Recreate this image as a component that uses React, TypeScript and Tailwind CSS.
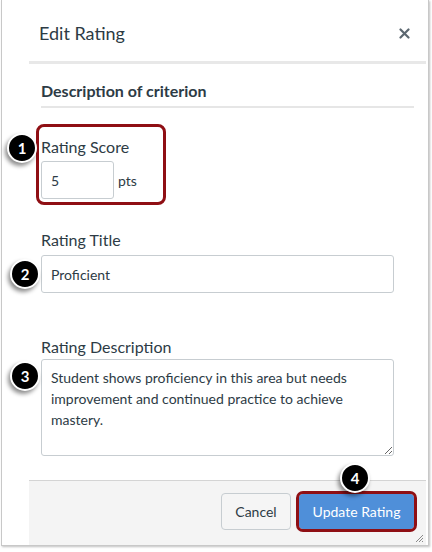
import type { ReactNode } from "react";

const font = { fontFamily: "Lato, 'Open Sans', sans-serif" };

function Badge({ n, className }: { n: number; className: string }) {
  return (
    <div
      className={`absolute flex h-[30px] w-[30px] items-center justify-center rounded-full border-2 border-white bg-black text-[15px] font-bold text-white shadow-[-2px_3px_4px_rgba(0,0,0,0.45)] ${className}`}
    >
      {n}
    </div>
  );
}

function Label({ children, className = "" }: { children: ReactNode; className?: string }) {
  return <div className={`text-base leading-[22px] text-[#2d3b45] ${className}`}>{children}</div>;
}

export default function App() {
  return (
    <div className="relative h-[552px] w-[432px] overflow-hidden bg-white" style={font}>
      <div className="relative ml-px flex h-[546px] w-[428px] flex-col border-x border-b border-[#c8c8c8] bg-white shadow-[1px_1px_2px_rgba(0,0,0,0.25)]">
        <header className="ml-[27px] mr-[2px] flex h-[64px] shrink-0 items-center justify-between border-b-[3px] border-[#e8e8e8] pl-[10px] pr-[16px] pt-[5px]">
          <h1 className="text-[18px] font-normal text-[#2d3b45]">Edit Rating</h1>
          <svg width="11" height="11" viewBox="0 0 11 11" className="mt-[1px]">
            <path d="M1.5 1.5 L9.5 9.5 M9.5 1.5 L1.5 9.5" stroke="#5b6770" strokeWidth="2.2" strokeLinecap="round" />
          </svg>
        </header>

        <div className="flex-1 pl-[39px] pr-[14px]">
          <div className="mt-[15px] border-b-2 border-[#e6e6e6] pb-[3px] text-base font-bold leading-6 text-[#2d3b45]">
            Description of criterion
          </div>

          <div className="relative mt-[28px] w-fit">
            <Label>Rating Score</Label>
            <div className="mt-[3px] flex items-center gap-[4px]">
              <div className="flex h-[38px] w-[73px] items-center rounded-[3px] border border-[#c7cdd1] px-[9px] text-[14px] text-[#2d3b45]">
                5
              </div>
              <span className="text-[14px] text-[#2d3b45]">pts</span>
            </div>
            <div className="absolute -left-[5px] -top-[12px] h-[81px] w-[130px] rounded-[8px] border-[3px] border-[#8f0f14]" />
          </div>

          <Label className="mt-[30px]">Rating Title</Label>
          <div className="mt-[4px] flex h-[38px] w-[353px] items-center rounded-[3px] border border-[#c7cdd1] px-[9px] text-[14px] text-[#2d3b45]">
            Proficient
          </div>

          <Label className="mt-[43px]">Rating Description</Label>
          <textarea
            readOnly
            className="mt-[1px] block h-[97px] w-[353px] rounded-[3px] border border-[#c7cdd1] px-[9px] py-[7px] text-[14px] leading-[21px] text-[#2d3b45] outline-none"
            style={font}
            defaultValue="Student shows proficiency in this area but needs improvement and continued practice to achieve mastery."
          />
        </div>

        <footer className="relative ml-[27px] mr-[2px] flex h-[65px] shrink-0 items-start justify-end gap-[8px] border-t border-[#d4d4d4] bg-[#f4f4f4] pr-[12px] pt-[12px]">
          <button className="h-[37px] w-[70px] rounded-[4px] border border-[#c7cdd1] bg-[#f5f5f5] text-[14px] text-[#2d3b45]">
            Cancel
          </button>
          <button className="mt-[1px] h-[35px] w-[115px] rounded-[4px] bg-[#4f8fd9] text-[14px] text-white outline-[3px] outline-offset-[0px] outline-[#8f0f14] outline-solid">
            Update Rating
          </button>
          <svg width="10" height="10" viewBox="0 0 10 10" className="absolute bottom-[2px] right-[2px]">
            <path d="M9 2 L2 9 M9 5 L5 9 M9 8 L8 9" stroke="#8a8a8a" strokeWidth="1" />
          </svg>
        </footer>
      </div>

      <Badge n={1} className="left-[7px] top-[133px]" />
      <Badge n={2} className="left-[10px] top-[259px]" />
      <Badge n={3} className="left-[10px] top-[361px]" />
      <Badge n={4} className="left-[340px] top-[463px]" />
    </div>
  );
}
